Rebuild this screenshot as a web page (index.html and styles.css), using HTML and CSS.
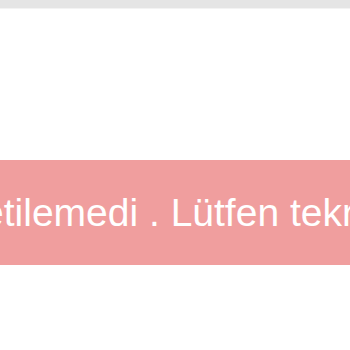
FILE: index.html
```html
<!DOCTYPE html>
<html lang="tr">
<head>
    <meta charset="UTF-8">
    <meta name="viewport" content="width=device-width, initial-scale=1.0">
    <title>İletişim</title>
    <link rel="stylesheet" href="styles.css">
</head>
<body>
    <div class="topbar"></div>
    <div class="page">
        <div class="alert">
            <span class="alert-text">Mesajınız iletilemedi . Lütfen tekrar deneyin.</span>
        </div>
    </div>
</body>
</html>
```

FILE: styles.css
```css
body {
    margin: 0;
    font-family: 'Liberation Sans', Arial, sans-serif;
    background: #ffffff;
    overflow: hidden;
}

.topbar {
    height: 8px;
    background: #e5e5e5;
    border-bottom: 1px solid #f3f3f3;
}

.page {
    padding-top: 151px;
}

.alert {
    height: 105px;
    background: #f09e9e;
    display: flex;
    align-items: center;
    overflow: hidden;
    white-space: nowrap;
}

.alert-text {
    color: #ffffff;
    font-size: 39px;
    margin-left: -213px;
}
```
